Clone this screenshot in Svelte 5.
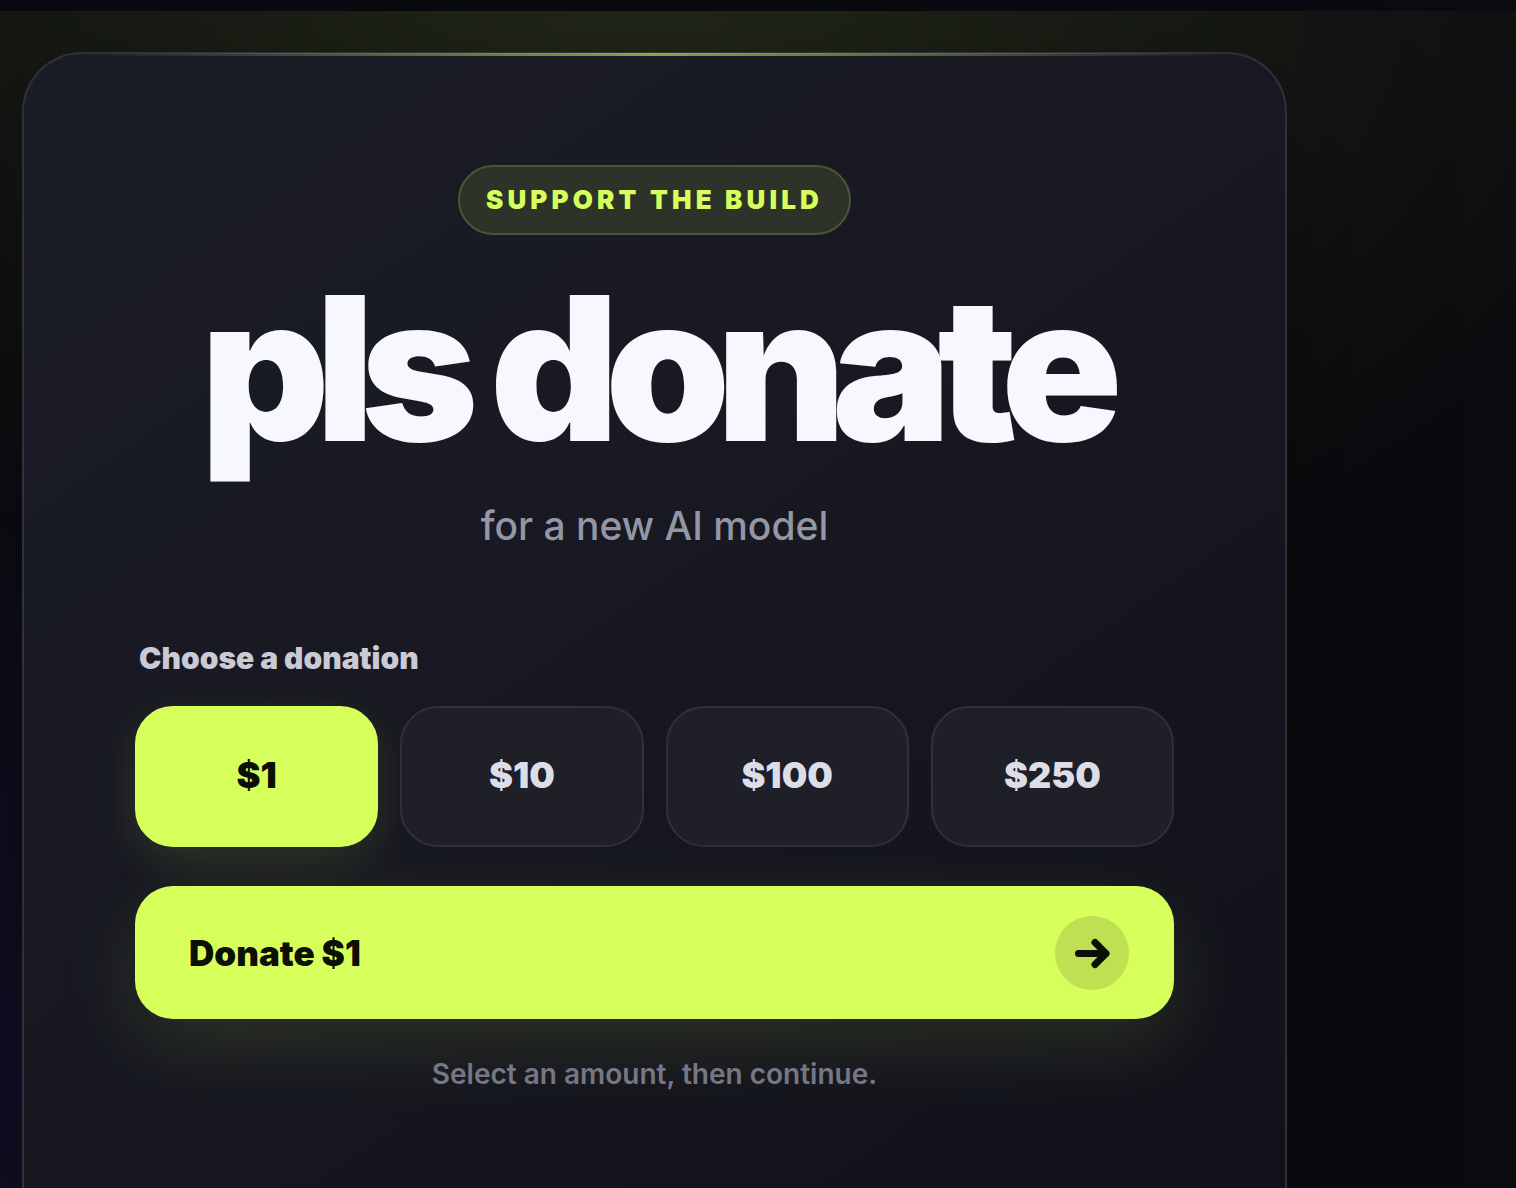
<script>
	const amounts = [1, 10, 100, 250];
	let selected = $state(1);
</script>

<div class="page">
	<header class="topbar"></header>
	<main>
		<section class="card">
			<span class="badge">Support the build</span>
			<h1>pls donate</h1>
			<p class="subtitle">for a new AI model</p>

			<div class="donation">
				<p class="label" id="donation-label">Choose a donation</p>
				<div class="amounts" role="group" aria-labelledby="donation-label">
					{#each amounts as amount}
						<button
							type="button"
							class="amount"
							class:selected={selected === amount}
							aria-pressed={selected === amount}
							onclick={() => (selected = amount)}
						>
							${amount}
						</button>
					{/each}
				</div>
				<button type="button" class="donate">
					<span>Donate ${selected}</span>
					<span class="arrow">
						<svg viewBox="0 0 74 74" aria-hidden="true">
							<path d="M23.500 37.500H51M40 26.500L51 37.500L40 48.500" />
						</svg>
					</span>
				</button>
			</div>

			<p class="note">Select an amount, then continue.</p>
		</section>
	</main>
</div>

<style>
	:global(body) {
		margin: 0;
		background: #08090d;
	}

	.page {
		display: flex;
		flex-direction: column;
		min-height: 100vh;
		box-sizing: border-box;
		overflow: hidden;
		font-family: Inter, 'Liberation Sans', sans-serif;
	}

	.topbar {
		height: 11px;
		background: #090b10;
	}

	main {
		display: flex;
		flex: 1;
		padding: 41px 229px 0 22px;
		background:
			radial-gradient(ellipse 1100px 680px at 42% -40px, rgba(215, 255, 91, 0.12), transparent),
			radial-gradient(ellipse 500px 700px at -10% 90%, rgba(80, 50, 230, 0.14), transparent),
			#0a0b0f;
	}

	.card {
		position: relative;
		display: flex;
		flex: 1;
		flex-direction: column;
		align-items: center;
		box-sizing: border-box;
		min-width: 0;
		padding: 111px 111px 96px;
		border: 2px solid #303138;
		border-bottom: 0;
		border-radius: 60px 60px 0 0;
		background: linear-gradient(145deg, #1a1c28 0%, #181922 40%, #11111a 100%);
		box-shadow: 0 60px 160px rgba(0, 0, 0, 0.35);
	}

	/* highlight along the top edge */
	.card::before {
		content: '';
		position: absolute;
		top: -1px;
		left: 5%;
		right: 5%;
		height: 3px;
		background: linear-gradient(90deg, transparent, rgba(215, 255, 91, 0.6), transparent);
	}

	.badge {
		box-sizing: border-box;
		padding: 0 26px;
		border: 2px solid #4b5538;
		border-radius: 35px;
		background: #2e3329;
		color: #d7ff5b;
		font-size: 26px;
		font-weight: 900;
		letter-spacing: 0.16em;
		line-height: 66px;
		text-transform: uppercase;
		white-space: nowrap;
	}

	h1 {
		margin: 51px 0 0;
		color: #f7f8fd;
		font-size: 200px;
		font-weight: 900;
		letter-spacing: -0.07em;
		line-height: 164px;
		white-space: nowrap;
	}

	.subtitle {
		margin: 52px 0 0;
		color: #9496a5;
		font-size: 39px;
		font-weight: 500;
		line-height: 48px;
	}

	.donation {
		width: 100%;
		margin-top: 90px;
	}

	.label {
		margin: 0 0 30px 4px;
		color: #c9cad5;
		font-size: 30px;
		font-weight: 900;
		line-height: 36px;
	}

	.amounts {
		display: grid;
		grid-template-columns: repeat(4, 1fr);
		gap: 22px;
	}

	button {
		box-sizing: border-box;
		font-family: inherit;
		cursor: pointer;
	}

	.amount {
		height: 141px;
		padding: 0 0 4px;
		border: 2px solid #303138;
		border-radius: 38px;
		background: #1f1f28;
		color: #dcdde7;
		font-size: 36px;
		font-weight: 900;
	}

	.amount.selected {
		border-color: #d7ff5b;
		background: #d7ff5b;
		color: #0b0f05;
		box-shadow: 0 14px 44px rgba(215, 255, 91, 0.12);
	}

	.donate {
		display: flex;
		align-items: center;
		justify-content: space-between;
		width: 100%;
		height: 133px;
		margin-top: 39px;
		padding: 0 45px 0 54px;
		border: 0;
		border-radius: 38px;
		background: #d7ff5b;
		color: #0b0f05;
		font-size: 35px;
		font-weight: 900;
		box-shadow: 0 26px 80px rgba(215, 255, 91, 0.12);
	}

	.arrow {
		width: 74px;
		height: 74px;
		border-radius: 50%;
		background: #bfe052;
	}

	svg {
		display: block;
		fill: none;
		stroke: #0b0f05;
		stroke-width: 7;
		stroke-linecap: round;
		stroke-linejoin: round;
	}

	.note {
		margin: 38px 0 0;
		color: #757784;
		font-size: 28px;
		font-weight: 600;
		line-height: 34px;
	}
</style>
